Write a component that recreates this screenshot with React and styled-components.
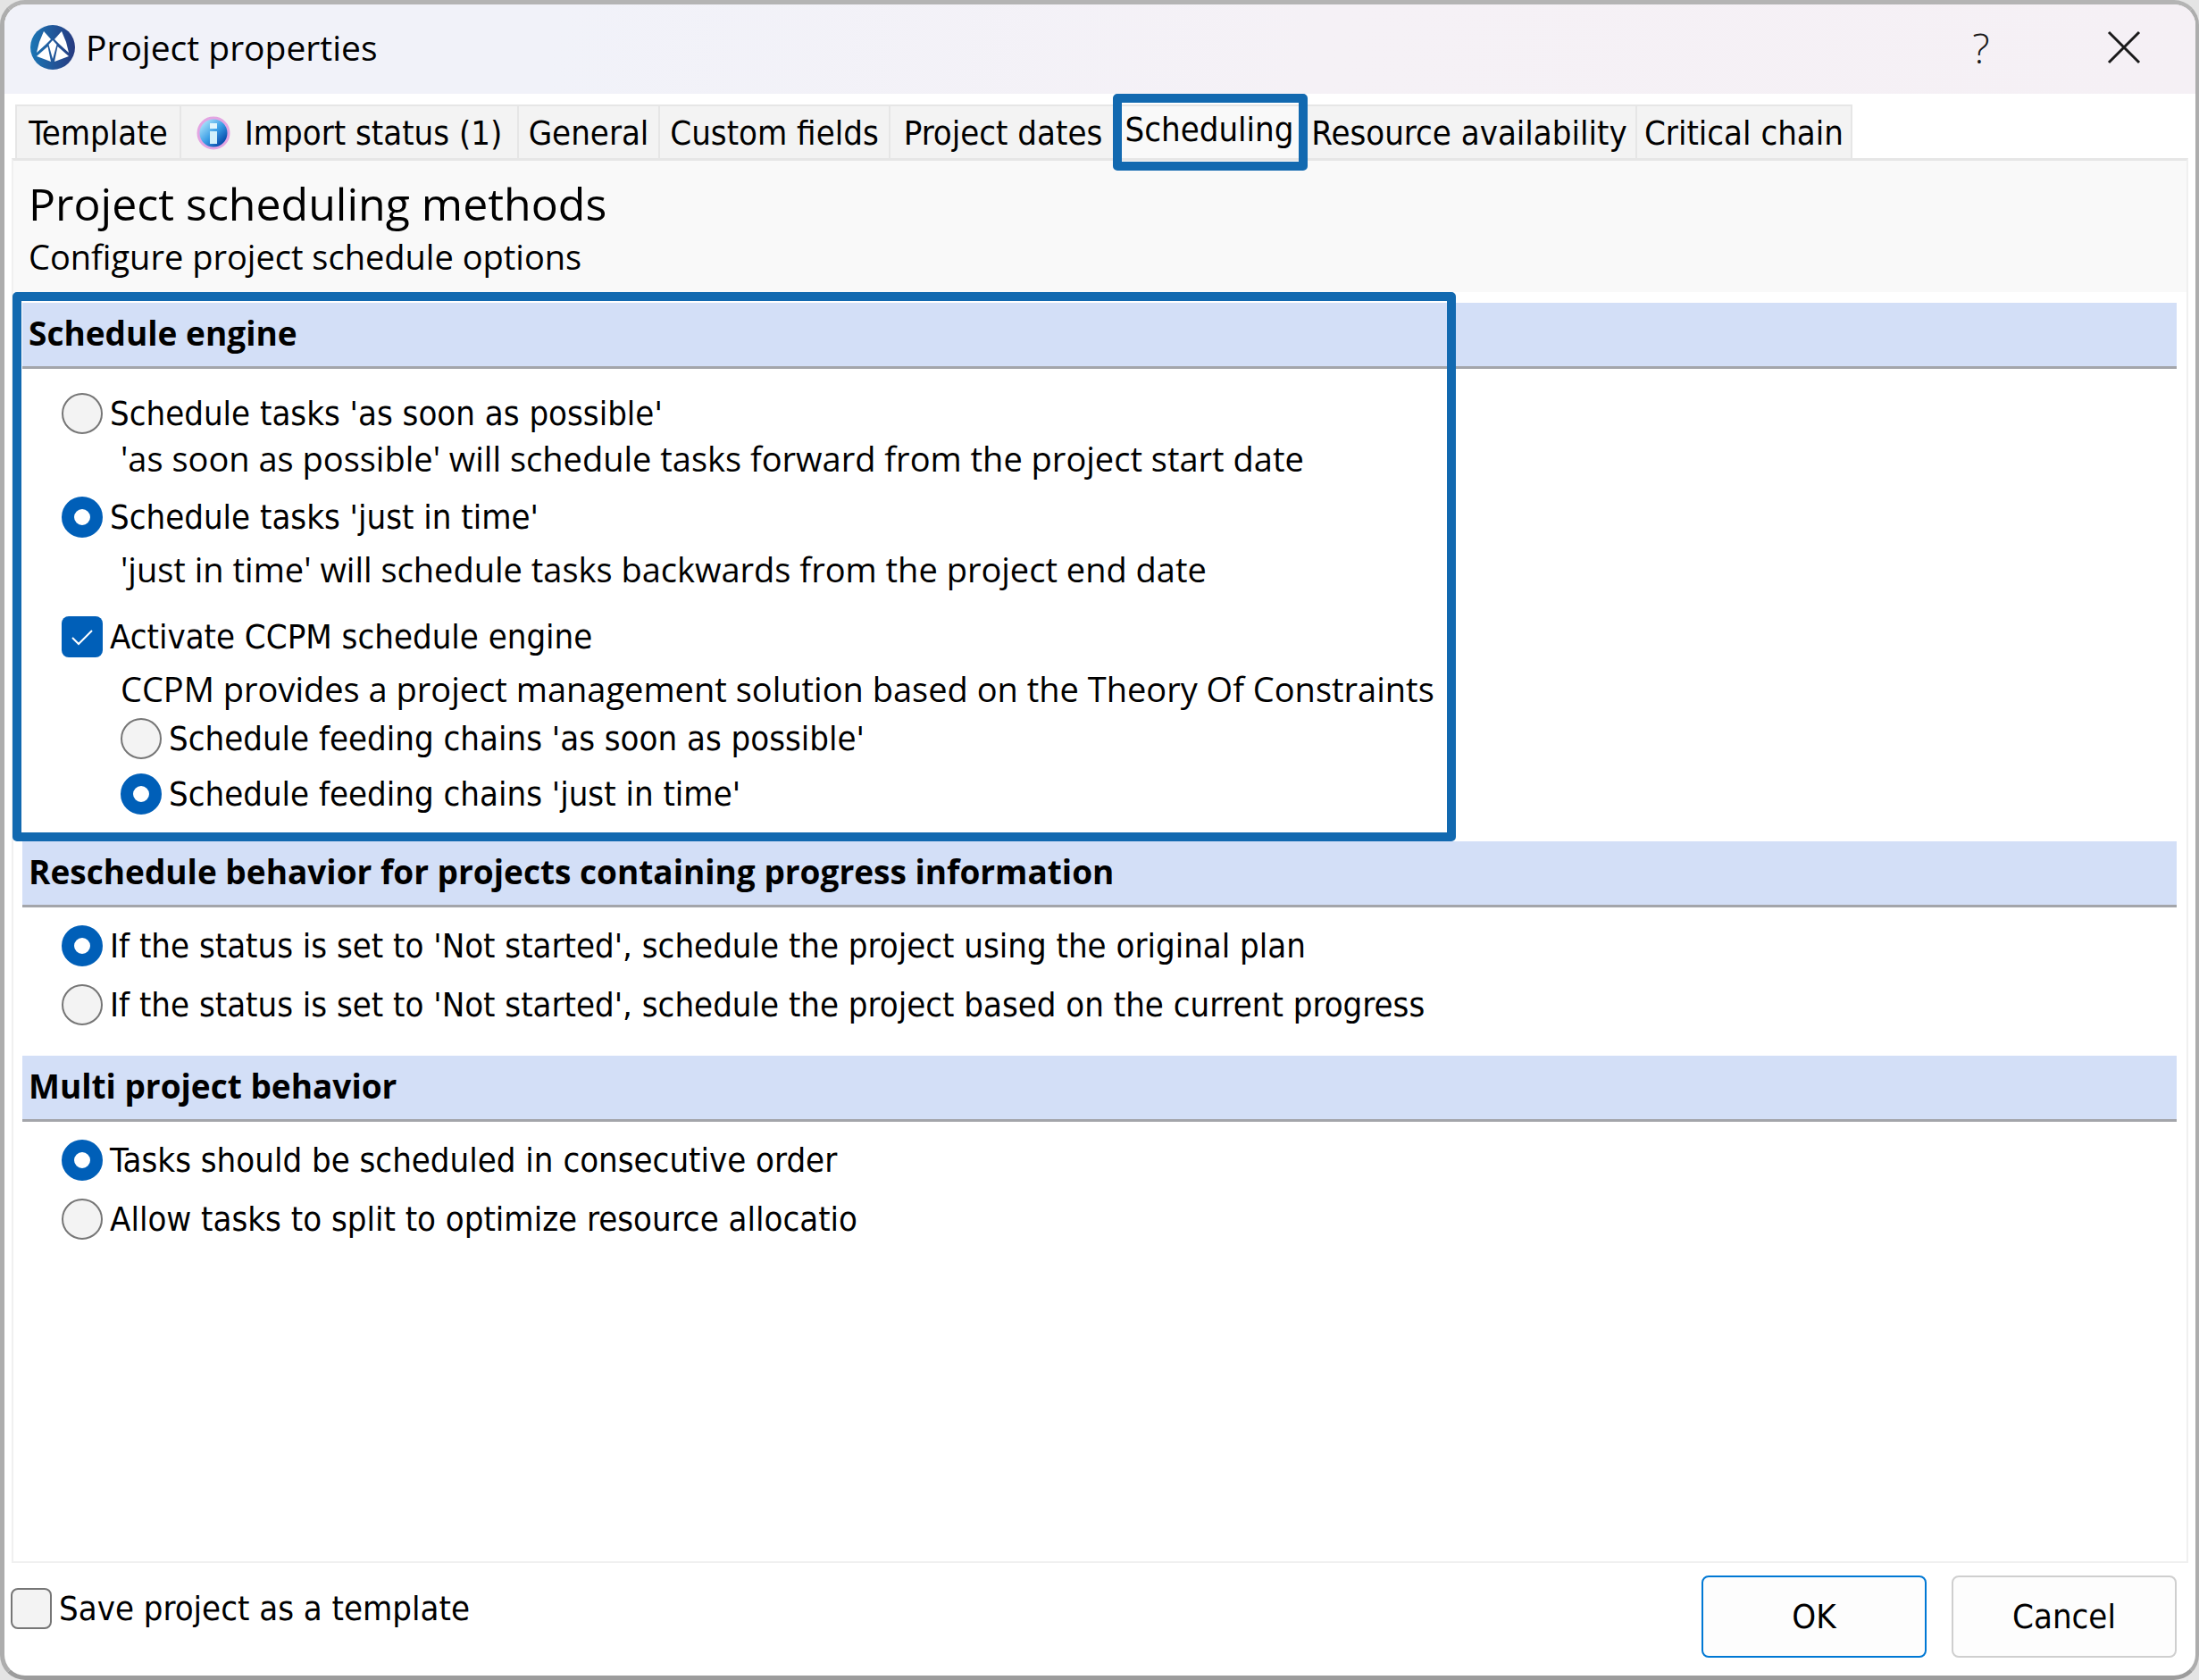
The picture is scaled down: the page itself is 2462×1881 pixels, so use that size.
import React, { useState } from "react";
import styled, { createGlobalStyle } from "styled-components";

const GlobalStyle = createGlobalStyle`
  * {
    box-sizing: border-box;
  }

  body {
    margin: 0;
    background: #e4e4e4;
    color: #000;
    font-family: "DejaVu Sans Condensed", "Noto Sans", sans-serif;
    font-size: 38px;
    line-height: 46px;
  }
`;

const uiFont = `"Open Sans", "Noto Sans", sans-serif`;

const Dialog = styled.main`
  display: flex;
  flex-direction: column;
  min-height: 100vh;
  border-style: solid;
  border-width: 5px 4px 5px 5px;
  border-color: #b4b4b4 #adadad #9c9c9c #adadad;
  border-radius: 28px;
  background: #fff;
  overflow: hidden;
`;

const TitleBar = styled.header`
  display: flex;
  align-items: center;
  height: 100px;
  padding: 0 28px 4px 29px;
  background: linear-gradient(100deg, #f1f2f9 25%, #f5f1f6 60%, #f5f0f5);
`;

const Title = styled.h1`
  flex: 1;
  margin: 0 0 0 12px;
  font-family: ${uiFont};
  font-size: 39px;
  font-weight: 400;
`;

const TitleButton = styled.button`
  display: flex;
  align-items: center;
  justify-content: center;
  width: 104px;
  height: 80px;
  margin-left: 56px;
  padding: 0;
  border: none;
  background: none;
  color: #1a1a1a;
  font-family: ${uiFont};
  font-size: 46px;
  font-weight: 300;
`;

const Tabs = styled.nav`
  display: flex;
  height: 60px;
  margin: 12px 12px 0;
`;

const Tab = styled.button`
  position: relative;
  display: flex;
  flex: none;
  align-items: center;
  justify-content: center;
  gap: 16px;
  width: ${(props) => props.$width}px;
  padding: ${(props) => (props.$active ? "0 0 6px" : "2px 0 0")};
  border: solid #e6e6e6;
  border-width: 2px 2px 0 0;
  background: ${(props) => (props.$active ? "#f9f9f9" : "#f3f3f3")};
  color: #000;
  font: inherit;
  white-space: nowrap;

  &:first-child {
    border-left-width: 2px;
  }
`;

/* Blue frame laid over the part the user should look at */
const TabMarker = styled.span`
  position: absolute;
  z-index: 1;
  inset: -14px -7px -14px -5px;
  border: 10px solid #1269b0;
  border-radius: 5px;
`;

const Panel = styled.div`
  display: flex;
  flex: 1;
  flex-direction: column;
  margin: 0 8px;
  border: 2px solid #f0f0f0;
  border-top: 3px solid #e6e6e6;
`;

const PanelHeader = styled.div`
  height: 147px;
  padding: 20px 17px 0;
  background: #f9f9f9;
`;

const PanelTitle = styled.h2`
  margin: 0;
  font-family: ${uiFont};
  font-size: 50px;
  font-weight: 400;
  line-height: 56px;
`;

const PanelSubtitle = styled.p`
  margin: 8px 0 0;
  font-family: ${uiFont};
  font-size: 38px;
`;

const Sections = styled.div`
  padding: 12px 11px 0 10px;
`;

const Section = styled.section`
  position: relative;
`;

const SectionMarker = styled.div`
  position: absolute;
  inset: -12px auto 0 -11px;
  width: 67%;
  border: 10px solid #1269b0;
  border-radius: 5px;
  pointer-events: none;
`;

const SectionTitle = styled.h3`
  margin: 0;
  padding: 11px 7px 14px;
  border-bottom: 3px solid #a3a5aa;
  background: #d3dff7;
  font-family: ${uiFont};
  font-size: 37px;
  font-weight: 700;
`;

const SectionBody = styled.div`
  padding: ${(props) => (props.$roomy ? "27px 44px 30px" : "20px 44px 34px")};
`;

const Option = styled.label`
  display: flex;
  align-items: center;
  gap: 8px;
  width: fit-content;
  margin-top: ${(props) => props.$space || 0}px;
  margin-left: ${(props) => (props.$nested ? "66px" : "0")};
`;

const Description = styled.p`
  margin: ${(props) => props.$space}px 0 0 66px;
  font-family: ${uiFont};
`;

const Radio = styled.input.attrs({ type: "radio" })`
  appearance: none;
  flex: none;
  width: 46px;
  height: 46px;
  margin: 0;
  border: 2px solid #767676;
  border-radius: 50%;
  background: #f3f3f3;

  &:checked {
    border: 14px solid #005fb8;
    background: #fff;
  }
`;

const checkMark = `url("data:image/svg+xml,%3Csvg xmlns='http://www.w3.org/2000/svg' viewBox='0 0 46 46'%3E%3Cpath d='M12 24l7 7 15-15' fill='none' stroke='white' stroke-width='2'/%3E%3C/svg%3E")`;

const Checkbox = styled.input.attrs({ type: "checkbox" })`
  appearance: none;
  flex: none;
  width: 46px;
  height: 46px;
  margin: 0;
  border: 2px solid #767676;
  border-radius: 8px;
  background: #f3f3f3;

  &:checked {
    border: none;
    background: #005fb8 ${checkMark} center / 46px 46px;
  }
`;

const Footer = styled.footer`
  display: flex;
  align-items: flex-start;
  justify-content: space-between;
  padding: 14px 21px 20px 7px;
`;

const Buttons = styled.div`
  display: flex;
  gap: 28px;
`;

const Button = styled.button`
  width: 252px;
  height: 92px;
  border: 2px solid ${(props) => (props.$primary ? "#0078d4" : "#cfcfcf")};
  border-radius: 8px;
  background: #fdfdfd;
  color: #000;
  font: inherit;
`;

const Logo = () => (
  <svg width="50" height="50" viewBox="0 0 50 50">
    <defs>
      <linearGradient id="logo" x1="0" y1="0" x2="1" y2="0">
        <stop offset="0" stopColor="#1b76b5" />
        <stop offset="1" stopColor="#273a80" />
      </linearGradient>
    </defs>
    <circle cx="25" cy="25" r="25" fill="url(#logo)" />
    <g fill="#fff">
      <path d="M15 7L23 16L17 22L7 31L10 19Z" />
      <path d="M35 7L27 16L33 22L43 31L40 19Z" />
      <path d="M19.500 24L23 41L7 35Z" />
      <path d="M30.500 24L27 41L43 35Z" />
      <path d="M25 17L29.500 22L25 38L20.500 22Z" />
    </g>
  </svg>
);

const InfoIcon = () => (
  <svg width="38" height="38" viewBox="0 0 38 38">
    <defs>
      <linearGradient id="info" x1="0" y1="0" x2="1" y2="1">
        <stop offset="0.150" stopColor="#a9e1fb" />
        <stop offset="0.500" stopColor="#3c9fe6" />
        <stop offset="0.800" stopColor="#0b50ae" />
      </linearGradient>
    </defs>
    <circle cx="19" cy="19" r="17" fill="url(#info)" stroke="#e3a5e2" strokeWidth="3" />
    <rect x="15" y="8" width="8" height="6" fill="#e2f6fd" />
    <rect x="15" y="17" width="8" height="14" fill="#d2f1fb" />
  </svg>
);

const CloseIcon = () => (
  <svg width="38" height="38" viewBox="0 0 38 38">
    <path d="M2 2L36 36M36 2L2 36" stroke="#1a1a1a" strokeWidth="3" />
  </svg>
);

const tabs = [
  { label: "Template", width: 186 },
  { label: "Import status (1)", width: 378, icon: <InfoIcon /> },
  { label: "General", width: 158 },
  { label: "Custom fields", width: 258 },
  { label: "Project dates", width: 254 },
  { label: "Scheduling", width: 208 },
  { label: "Resource availability", width: 374 },
  { label: "Critical chain", width: 241 },
];

const RadioOption = ({ group, value, selected, onSelect, children, ...rest }) => (
  <Option {...rest}>
    <Radio
      name={group}
      checked={selected === value}
      onChange={() => onSelect(value)}
    />
    {children}
  </Option>
);

const App = () => {
  const [engine, setEngine] = useState("jit");
  const [ccpm, setCcpm] = useState(true);
  const [feeding, setFeeding] = useState("jit");
  const [reschedule, setReschedule] = useState("plan");
  const [order, setOrder] = useState("consecutive");

  return (
    <>
      <GlobalStyle />
      <Dialog>
        <TitleBar>
          <Logo />
          <Title>Project properties</Title>
          <TitleButton aria-label="Help">?</TitleButton>
          <TitleButton aria-label="Close">
            <CloseIcon />
          </TitleButton>
        </TitleBar>

        <Tabs>
          {tabs.map(({ label, width, icon }) => (
            <Tab key={label} $width={width} $active={label === "Scheduling"}>
              {icon}
              {label}
              {label === "Scheduling" && <TabMarker />}
            </Tab>
          ))}
        </Tabs>

        <Panel>
          <PanelHeader>
            <PanelTitle>Project scheduling methods</PanelTitle>
            <PanelSubtitle>Configure project schedule options</PanelSubtitle>
          </PanelHeader>

          <Sections>
            <Section>
              <SectionTitle>Schedule engine</SectionTitle>
              <SectionBody $roomy>
                <RadioOption group="engine" value="asap" selected={engine} onSelect={setEngine}>
                  Schedule tasks 'as soon as possible'
                </RadioOption>
                <Description $space={4}>
                  'as soon as possible' will schedule tasks forward from the project start date
                </Description>
                <RadioOption group="engine" value="jit" selected={engine} onSelect={setEngine} $space={20}>
                  Schedule tasks 'just in time'
                </RadioOption>
                <Description $space={12}>
                  'just in time' will schedule tasks backwards from the project end date
                </Description>
                <Option $space={30}>
                  <Checkbox checked={ccpm} onChange={() => setCcpm(!ccpm)} />
                  Activate CCPM schedule engine
                </Option>
                <Description $space={12}>
                  CCPM provides a project management solution based on the Theory Of Constraints
                </Description>
                <RadioOption group="feeding" value="asap" selected={feeding} onSelect={setFeeding} $nested $space={10}>
                  Schedule feeding chains 'as soon as possible'
                </RadioOption>
                <RadioOption group="feeding" value="jit" selected={feeding} onSelect={setFeeding} $nested $space={16}>
                  Schedule feeding chains 'just in time'
                </RadioOption>
              </SectionBody>
              <SectionMarker />
            </Section>

            <Section>
              <SectionTitle>
                Reschedule behavior for projects containing progress information
              </SectionTitle>
              <SectionBody>
                <RadioOption group="reschedule" value="plan" selected={reschedule} onSelect={setReschedule}>
                  If the status is set to 'Not started', schedule the project using the original plan
                </RadioOption>
                <RadioOption group="reschedule" value="progress" selected={reschedule} onSelect={setReschedule} $space={20}>
                  If the status is set to 'Not started', schedule the project based on the current progress
                </RadioOption>
              </SectionBody>
            </Section>

            <Section>
              <SectionTitle>Multi project behavior</SectionTitle>
              <SectionBody>
                <RadioOption group="order" value="consecutive" selected={order} onSelect={setOrder}>
                  Tasks should be scheduled in consecutive order
                </RadioOption>
                <RadioOption group="order" value="split" selected={order} onSelect={setOrder} $space={20}>
                  Allow tasks to split to optimize resource allocatio
                </RadioOption>
              </SectionBody>
            </Section>
          </Sections>
        </Panel>

        <Footer>
          <Option $space={14}>
            <Checkbox />
            Save project as a template
          </Option>
          <Buttons>
            <Button $primary>OK</Button>
            <Button>Cancel</Button>
          </Buttons>
        </Footer>
      </Dialog>
    </>
  );
};

export default App;
